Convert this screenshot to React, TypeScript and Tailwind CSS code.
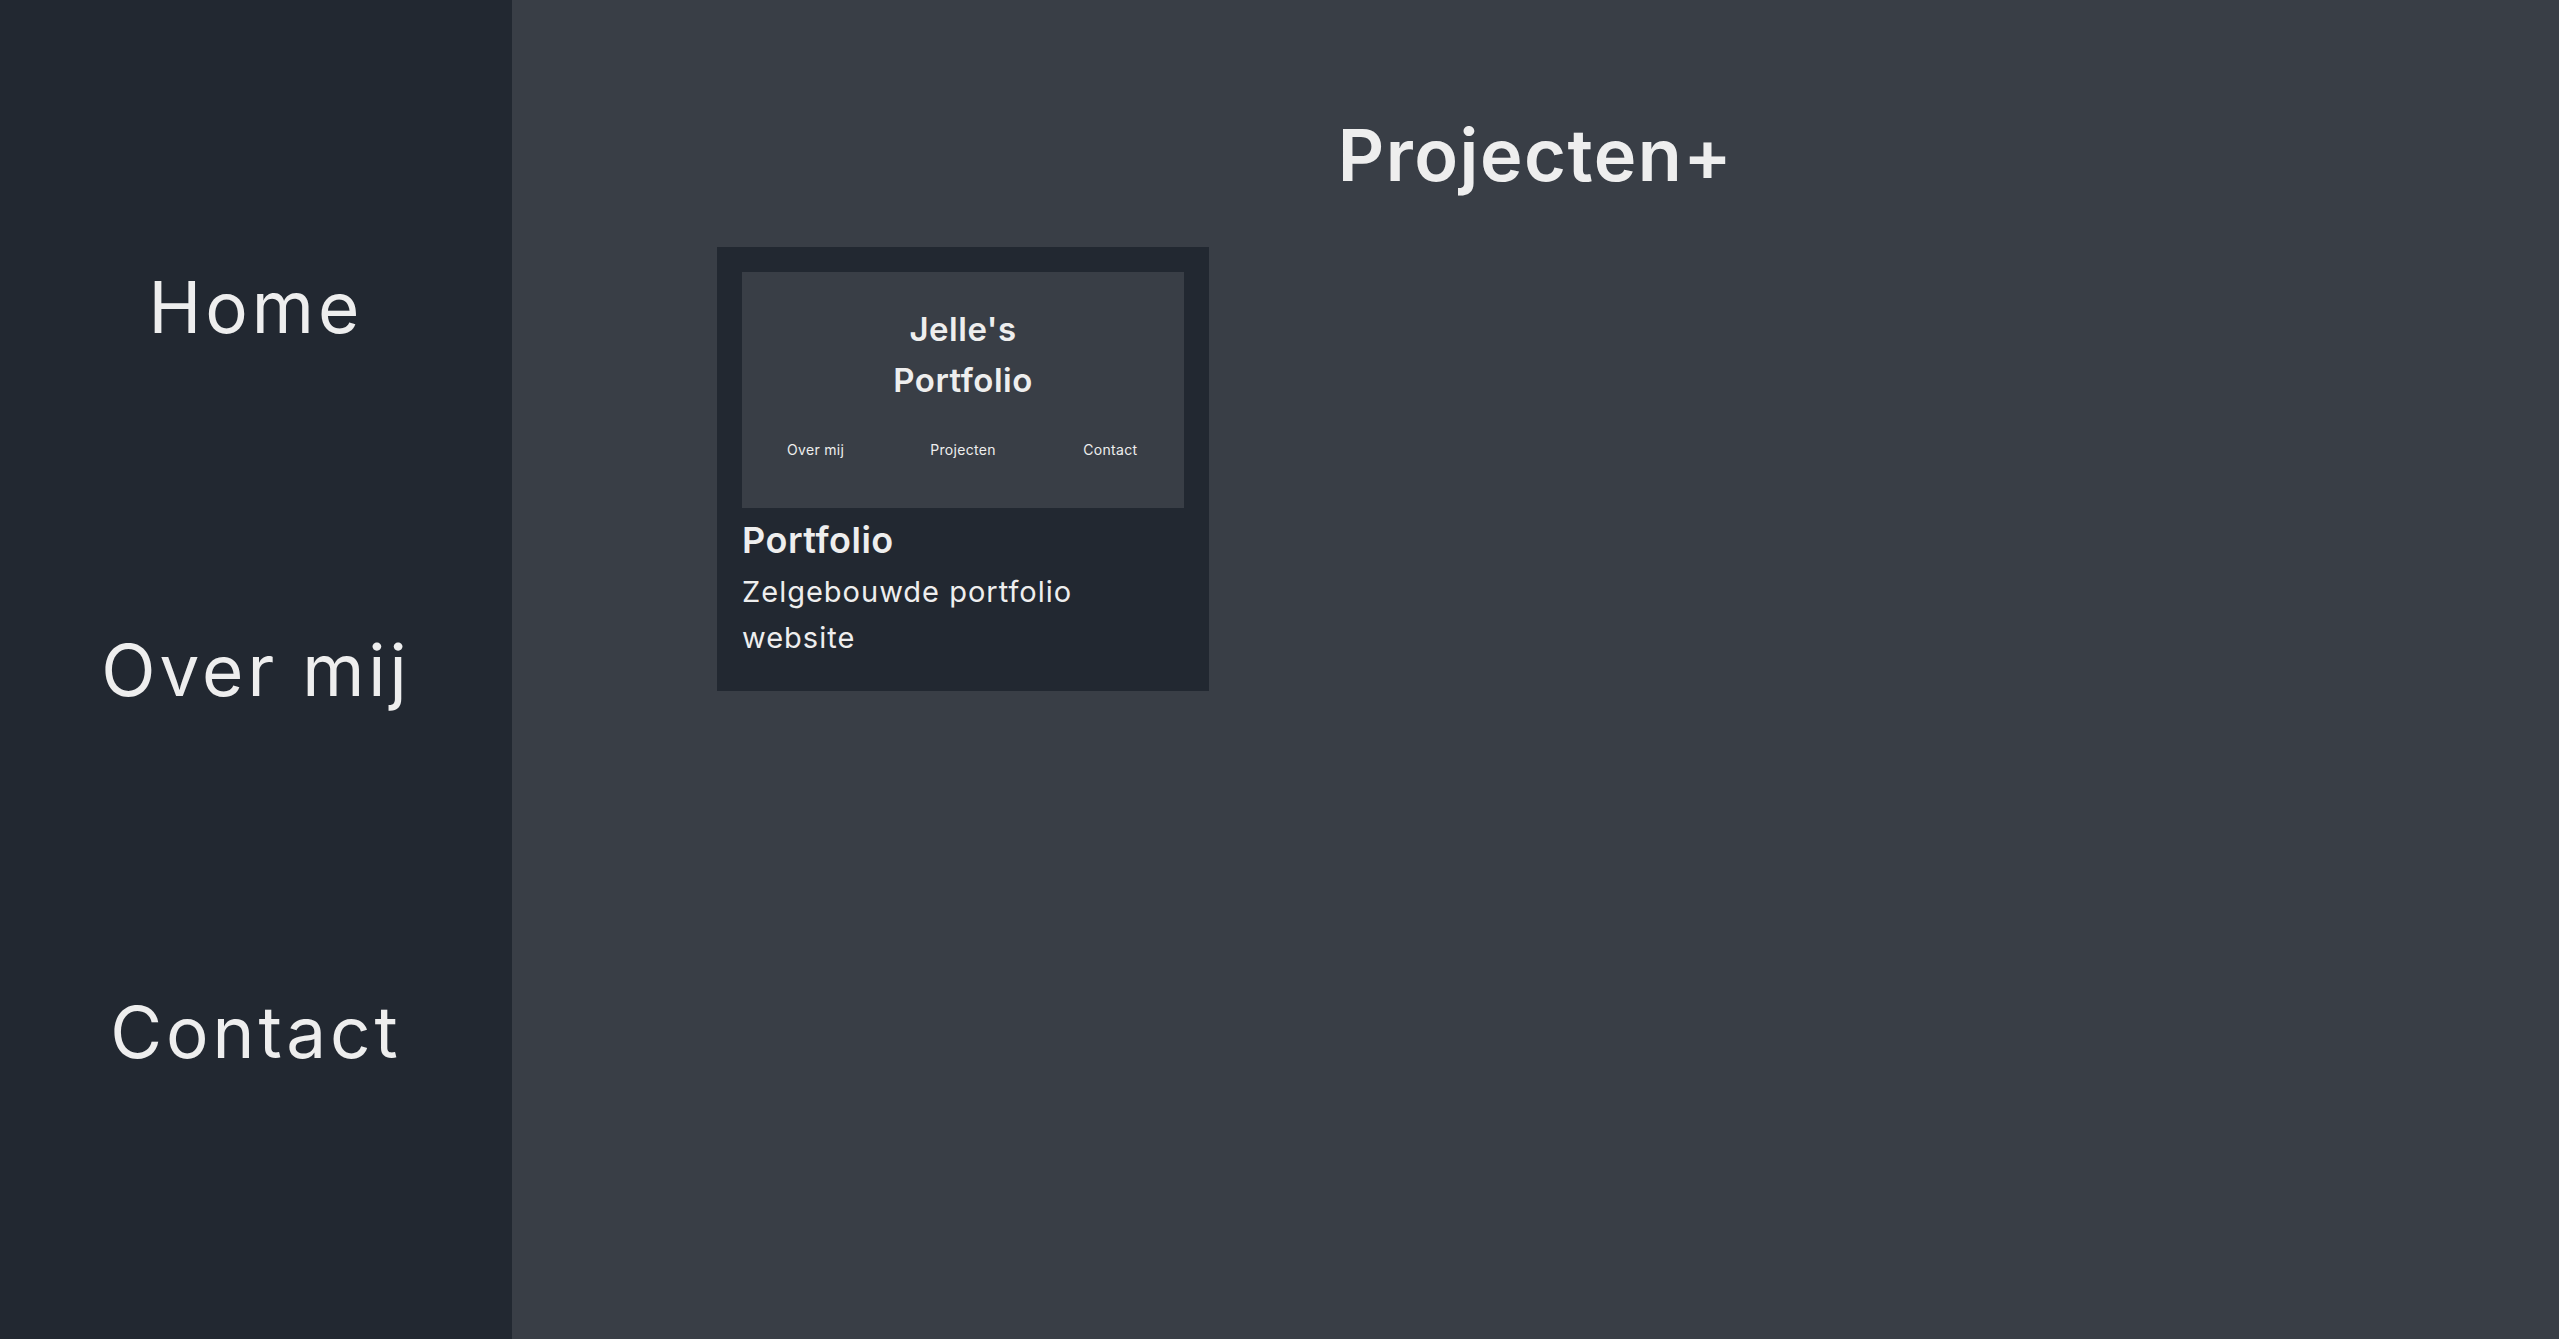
export default function App() {
  const nav = ["Home", "Over mij", "Contact"];

  return (
    <div
      className="flex h-screen w-full bg-[#393e46] text-[#eeeeee]"
      style={{ fontFamily: "Inter, 'Noto Sans', sans-serif" }}
    >
      {/* Sidebar */}
      <aside className="flex h-full w-[512px] shrink-0 flex-col items-center justify-evenly bg-[#222831]">
        {nav.map((item) => (
          <a key={item} href="#" className="text-[71px] leading-[112px] font-normal tracking-[4px]">
            {item}
          </a>
        ))}
      </aside>

      {/* Content */}
      <main className="flex flex-1 flex-col">
        <h1 className="mt-[114px] text-center text-[72px] leading-[1.15] font-semibold tracking-[1.5px]">
          Projecten+
        </h1>

        <div className="mt-[50px] grid grid-cols-[492px] pl-[205px]">
          <div className="flex flex-col bg-[#222831] p-[25px] pb-[30px]">
            <div className="flex h-[236px] flex-col bg-[#393e46] pt-[32px]">
              <p className="text-center text-[33px] leading-[51px] font-semibold tracking-[0.5px]">
                Jelle's
                <br />
                Portfolio
              </p>
              <div className="mt-[33px] flex text-[14px] leading-[21px] tracking-[0.3px]">
                <span className="flex-1 text-center">Over mij</span>
                <span className="flex-1 text-center">Projecten</span>
                <span className="flex-1 text-center">Contact</span>
              </div>
            </div>
            <h2 className="mt-[4px] text-[36px] leading-[57px] font-semibold tracking-[0.5px]">Portfolio</h2>
            <p className="text-[29px] leading-[46px] tracking-[1px]">
              Zelgebouwde portfolio
              <br />
              website
            </p>
          </div>
        </div>
      </main>
    </div>
  );
}
